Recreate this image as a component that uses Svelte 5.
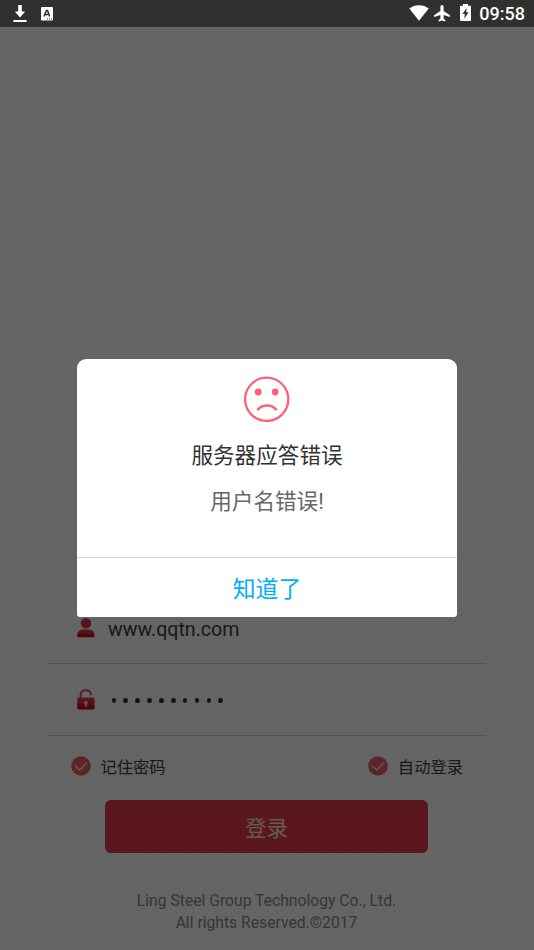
<script lang="ts">
  let username = $state('www.qqtn.com');
  let password = $state('0123456789');
  let dialogOpen = $state(true);

  let options = $state([
    { id: 'remember', label: '记住密码', checked: true },
    { id: 'auto', label: '自动登录', checked: true },
  ]);

  let masked = $derived(password.split(''));
</script>

<div class="screen">
  <header class="status-bar">
    <div class="status-left">
      <svg width="14" height="18" viewBox="0 0 14 18" fill="#fff">
        <path d="M5.2 0h3.6v6.5h3.4L7 12.6 1.8 6.5h3.4z" />
        <rect x="0.5" y="15" width="13" height="2" />
      </svg>
      <svg class="app-icon" width="12" height="14" viewBox="0 0 12 14">
        <rect width="12" height="13.5" rx="0.8" fill="#fff" />
        <path d="M3.1 9.4 5.3 3.6h1.2l2.2 5.8M4 7.6h3.8" fill="none" stroke="#303030" stroke-width="1.5" />
        <path d="M6 11.9h1M8 11.9h1M10 11.9h1" stroke="#303030" stroke-width="1" />
      </svg>
    </div>
    <div class="status-right">
      <svg class="wifi" width="20" height="16" viewBox="0 0 20 16" fill="#fff">
        <path d="M10 15.7 0.3 3.6C3 1.4 6.3.2 10 .2s7 1.2 9.7 3.4z" />
      </svg>
      <svg class="plane" width="16" height="17" viewBox="0 0 16 17" fill="#fff">
        <path d="M16 11.9v-1.7L9.6 6.1V1.6a1.6 1.6 0 0 0-3.2 0v4.5L0 10.2v1.7l6.4-2v3.8l-1.8 1.4v1.4l3.4-1 3.4 1v-1.4l-1.8-1.4V9.9z" />
      </svg>
      <svg class="battery" width="11" height="17" viewBox="0 0 11 17">
        <path d="M3 0h5v1.8h2q1 0 1 1V16q0 1-1 1H1q-1 0-1-1V2.8q0-1 1-1h2z" fill="#fff" />
        <path d="M6.7 4 2.4 10h2.4l-.5 4.7 4.3-6.4H6.2z" fill="#303030" />
      </svg>
      <span class="clock">09:58</span>
    </div>
  </header>

  <main class="login">
    <div class="field">
      <svg class="field-icon" width="18" height="20" viewBox="0 0 18 20">
        <defs>
          <linearGradient id="red" x1="0" y1="0" x2="0" y2="1">
            <stop offset="0" stop-color="#e04856" />
            <stop offset="1" stop-color="#b8000e" />
          </linearGradient>
        </defs>
        <circle cx="9" cy="5.2" r="5.2" fill="#d03848" />
        <path d="M0.2 17.5C.2 13.4 3 11.5 6 11.5h6c3 0 5.5 1.9 5.5 6 0 1.3-.6 1.8-1.8 1.8H2c-1.2 0-1.8-.5-1.8-1.8z" fill="url(#red)" />
      </svg>
      <span class="username">{username}</span>
    </div>

    <div class="field">
      <svg class="field-icon" width="18" height="21" viewBox="0 0 18 21">
        <path d="M3.6 9V5.8C3.6 3 5.5 1.3 8.7 1.3s5.2 1.7 5.2 4.2v.7" fill="none" stroke="#d8404e" stroke-width="1.9" />
        <rect x="0.2" y="8.5" width="17.3" height="12" rx="1.4" fill="url(#red)" />
        <path d="M8.9 12a1.8 1.8 0 0 1 .9 3.4v2.3H8v-2.3A1.8 1.8 0 0 1 8.9 12z" fill="#f5d9db" />
      </svg>
      <div class="password">
        {#each masked as _}
          <span class="dot"></span>
        {/each}
      </div>
    </div>

    <div class="options">
      {#each options as option (option.id)}
        <button class="option" onclick={() => (option.checked = !option.checked)}>
          <svg width="20" height="20" viewBox="0 0 20 20">
            <circle cx="10" cy="10" r="9.7" fill={option.checked ? '#e75c68' : '#bbbbbb'} />
            <path d="m4 9.4 4.6 4.6 7.3-7.2" fill="none" stroke="#fbdcdf" stroke-width="1.4" />
          </svg>
          <span>{option.label}</span>
        </button>
      {/each}
    </div>

    <button class="submit">登录</button>

    <footer class="copyright">
      <div>Ling Steel Group Technology Co., Ltd.</div>
      <div>All rights Reserved.©2017</div>
    </footer>
  </main>

  {#if dialogOpen}
    <div class="overlay">
      <div class="dialog" role="alertdialog">
        <div class="dialog-body">
          <svg class="sad" width="46" height="46" viewBox="0 0 46 46">
            <circle cx="22.7" cy="23.3" r="21.6" fill="none" stroke="#ff6078" stroke-width="2.3" />
            <circle cx="14.2" cy="16" r="3.4" fill="#ff6078" />
            <circle cx="31.2" cy="16" r="3.4" fill="#ff6078" />
            <path d="M14 33.4c4.5-5.2 13.5-5.2 18 0" fill="none" stroke="#ff6078" stroke-width="2.4" stroke-linecap="round" />
          </svg>
          <div class="title">服务器应答错误</div>
          <div class="message">用户名错误!</div>
        </div>
        <button class="confirm" onclick={() => (dialogOpen = false)}>知道了</button>
      </div>
    </div>
  {/if}
</div>

<style>
  :global(body) {
    background: #303030;
  }

  .screen {
    position: relative;
    display: flex;
    flex-direction: column;
    height: 950px;
    overflow: hidden;
    font-family: Roboto, 'Noto Sans CJK SC', sans-serif;
  }

  button {
    border: none;
    padding: 0;
    background: none;
    font-family: inherit;
    cursor: pointer;
  }

  svg {
    display: block;
    flex-shrink: 0;
  }

  .status-bar {
    display: flex;
    justify-content: space-between;
    box-sizing: border-box;
    height: 27px;
    padding: 5px 9px 0 13px;
    background: #303030;
  }

  .status-left,
  .status-right {
    display: flex;
    align-items: flex-start;
  }

  .app-icon {
    margin: 2px 0 0 14px;
  }

  .plane {
    margin-left: 5px;
  }

  .battery {
    margin: -1px 0 0 10px;
  }

  .clock {
    margin-left: 8px;
    color: #ffffff;
    font-size: 18px;
    font-weight: 500;
    line-height: 18px;
  }

  .login {
    flex: 1;
    display: flex;
    flex-direction: column;
    justify-content: flex-end;
    background: repeating-linear-gradient(45deg, #fcfcfc 0 2px, #f9f9f9 2px 4px);
  }

  .field {
    display: flex;
    align-items: center;
    box-sizing: border-box;
    height: 72px;
    margin: 0 48px 0 47px;
    padding-left: 30px;
    border-bottom: 1px solid #d2d2d2;
  }

  .username {
    margin: 3px 0 0 13px;
    color: #404040;
    font-size: 19.6px;
  }

  .password {
    display: flex;
    gap: 7.2px;
    margin: 2px 0 0 16.5px;
  }

  .dot {
    width: 4.7px;
    height: 5px;
    border-radius: 50%;
    background: #303030;
  }

  .options {
    display: flex;
    justify-content: space-between;
    height: 64px;
    padding: 0 71px;
  }

  .option {
    display: flex;
    align-items: center;
    gap: 9.5px;
    height: 59px;
    color: #404040;
    font-size: 16.3px;
  }

  .submit {
    height: 53px;
    margin: 0 106px 0 105px;
    padding-bottom: 1px;
    border-radius: 6px;
    background: #e43c46;
    color: #f8e0e0;
    font-size: 21.5px;
  }

  .copyright {
    height: 60px;
    padding: 37px 1px 0 0;
    color: #888888;
    font-size: 15.7px;
    line-height: 22px;
    text-align: center;
  }

  .overlay {
    position: absolute;
    inset: 27px 0 0;
    display: flex;
    align-items: center;
    justify-content: center;
    padding-bottom: 1px;
    background: rgba(0, 0, 0, 0.6);
  }

  .dialog {
    display: flex;
    flex-direction: column;
    width: 380px;
    height: 258px;
    overflow: hidden;
    border-radius: 9px 9px 3px 3px;
    background: #ffffff;
    text-align: center;
  }

  .dialog-body {
    flex: 1;
    display: flex;
    flex-direction: column;
    align-items: center;
    padding-top: 17px;
    border-bottom: 1px solid #d8d8d8;
  }

  .title {
    margin-top: 18px;
    color: #333333;
    font-size: 21.6px;
    line-height: 32px;
  }

  .message {
    margin-top: 14px;
    color: #666666;
    font-size: 21.6px;
    line-height: 32px;
  }

  .confirm {
    height: 59px;
    padding-bottom: 1px;
    color: #00aeff;
    font-size: 22.8px;
  }
</style>
